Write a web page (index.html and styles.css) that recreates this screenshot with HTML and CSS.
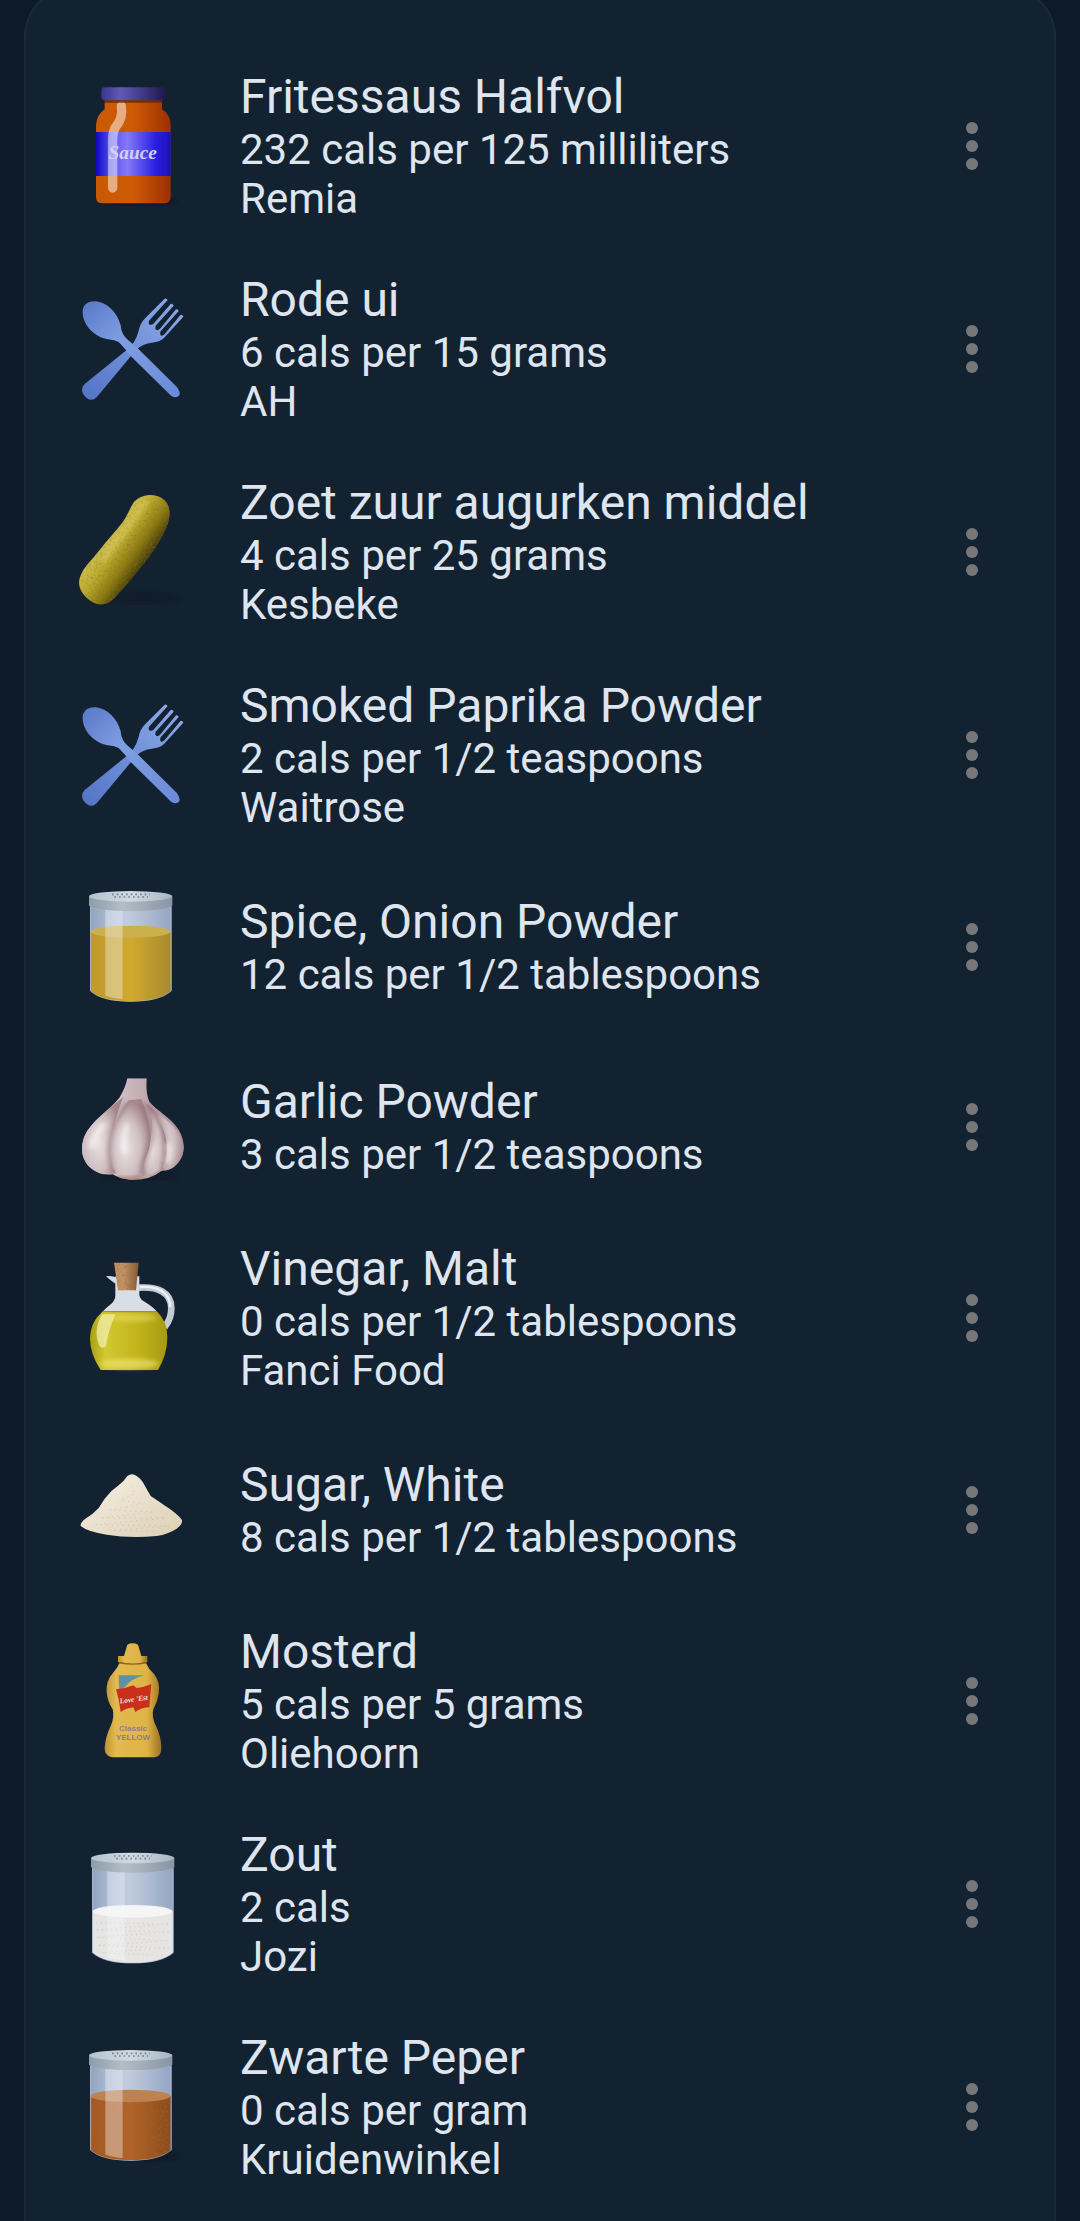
FILE: index.html
```html
<!DOCTYPE html>
<html lang="en">
<head>
  <meta charset="UTF-8">
  <meta name="viewport" content="width=device-width, initial-scale=1">
  <title>Foods</title>
  <link rel="stylesheet" href="styles.css">
</head>
<body>
  <!-- shared shapes and gradients -->
  <svg class="defs" aria-hidden="true">
    <defs>
      <linearGradient id="sauceBody">
        <stop offset="0" stop-color="#c85a06"/><stop offset=".5" stop-color="#cf5a04"/><stop offset="1" stop-color="#9c2f02"/>
      </linearGradient>
      <linearGradient id="sauceLabel">
        <stop offset="0" stop-color="#0d08c0"/><stop offset=".22" stop-color="#5a54f4"/><stop offset=".42" stop-color="#8478f6"/><stop offset=".8" stop-color="#2a1ee0"/><stop offset="1" stop-color="#1c10b8"/>
      </linearGradient>
      <linearGradient id="sauceLid">
        <stop offset="0" stop-color="#3a3390"/><stop offset=".3" stop-color="#6259b6"/><stop offset="1" stop-color="#1d1850"/>
      </linearGradient>
      <linearGradient id="spoonFill" x1="0" y1="0" x2="1" y2="1">
        <stop offset="0" stop-color="#5878c8"/><stop offset=".4" stop-color="#7f9ee2"/><stop offset="1" stop-color="#6a8ad8"/>
      </linearGradient>
      <linearGradient id="forkFill" x1="1" y1="0" x2="0" y2="1">
        <stop offset="0" stop-color="#8fabe8"/><stop offset=".5" stop-color="#7190da"/><stop offset="1" stop-color="#5273c4"/>
      </linearGradient>
      <linearGradient id="pickleFill" x1=".3" y1=".35" x2=".68" y2=".68">
        <stop offset="0" stop-color="#d0c252"/><stop offset=".35" stop-color="#bdab2e"/><stop offset=".7" stop-color="#8a7a10"/><stop offset="1" stop-color="#403a06"/>
      </linearGradient>
      <linearGradient id="glass">
        <stop offset="0" stop-color="#8fa2be"/><stop offset=".2" stop-color="#a9b8d0"/><stop offset=".45" stop-color="#c3cddf"/><stop offset="1" stop-color="#94a5c2"/>
      </linearGradient>
      <linearGradient id="lidTop">
        <stop offset="0" stop-color="#b4c3ce"/><stop offset=".5" stop-color="#d0dae2"/><stop offset="1" stop-color="#a8b6c1"/>
      </linearGradient>
      <linearGradient id="lidSide">
        <stop offset="0" stop-color="#8d9ca9"/><stop offset=".4" stop-color="#b3bdc6"/><stop offset="1" stop-color="#8796a4"/>
      </linearGradient>
      <linearGradient id="onionFill">
        <stop offset="0" stop-color="#c0982c"/><stop offset=".5" stop-color="#d0a92e"/><stop offset="1" stop-color="#a88a30"/>
      </linearGradient>
      <linearGradient id="pepperFill">
        <stop offset="0" stop-color="#a75820"/><stop offset=".5" stop-color="#b4642a"/><stop offset="1" stop-color="#8d4a1a"/>
      </linearGradient>
      <linearGradient id="garlicFill">
        <stop offset="0" stop-color="#e6dde0"/><stop offset=".5" stop-color="#c9b3b8"/><stop offset="1" stop-color="#a98990"/>
      </linearGradient>
      <radialGradient id="clove" cx=".4" cy=".6" r=".6">
        <stop offset="0" stop-color="#e9e1e3"/><stop offset=".6" stop-color="#cfbec2"/><stop offset="1" stop-color="#a5868d"/>
      </radialGradient>
      <linearGradient id="oilFill">
        <stop offset="0" stop-color="#a8a014"/><stop offset=".2" stop-color="#d2c832"/><stop offset=".6" stop-color="#c4b41c"/><stop offset="1" stop-color="#a79a12"/>
      </linearGradient>
      <linearGradient id="cork">
        <stop offset="0" stop-color="#c08e5e"/><stop offset=".4" stop-color="#c59264"/><stop offset="1" stop-color="#855836"/>
      </linearGradient>
      <linearGradient id="sugarFill" x1="0" y1="0" x2="1" y2="1">
        <stop offset="0" stop-color="#f6f0e6"/><stop offset="1" stop-color="#dccfb4"/>
      </linearGradient>
      <linearGradient id="mustardFill">
        <stop offset="0" stop-color="#c0922f"/><stop offset=".2" stop-color="#e2ba50"/><stop offset=".75" stop-color="#dfb346"/><stop offset="1" stop-color="#9c7020"/>
      </linearGradient>
      <filter id="soft" x="-30%" y="-30%" width="160%" height="160%"><feGaussianBlur stdDeviation="6"/></filter>
      <filter id="grain" x="0" y="0" width="100%" height="100%">
        <feTurbulence type="fractalNoise" baseFrequency=".14" numOctaves="2" result="n"/>
        <feColorMatrix in="n" type="matrix" values="0 0 0 0 .25  0 0 0 0 .15  0 0 0 0 .05  1.4 0 0 0 -.66" result="specks"/>
        <feComposite in="specks" in2="SourceGraphic" operator="in" result="cut"/>
        <feMerge><feMergeNode in="SourceGraphic"/><feMergeNode in="cut"/></feMerge>
      </filter>
      <clipPath id="garlicClip">
        <path d="M202 34H260C259 58 258 80 268 104C290 132 332 150 356 188C378 226 376 266 350 292Q336 310 304 312Q270 340 212 338Q180 336 158 322Q120 326 96 306C66 284 58 246 74 206C94 162 148 130 178 92Q196 64 202 34Z"/>
      </clipPath>

      <symbol id="cutlery" viewBox="0 687 450 360">
        <path fill="url(#forkFill)" d="M66 990Q66 980 74 972L200 870Q226 850 236 812Q240 790 256 774L314 716Q320 714 323 720L267 782Q264 792 270 794Q276 796 282 790L332 732Q338 730 341 737L287 797Q284 808 290 810Q296 812 302 804L348 748Q354 746 356 753L302 814Q298 824 304 827Q310 828 316 820L362 764Q369 764 370 770L312 834Q300 846 276 848Q248 850 228 870L110 1012Q96 1026 80 1014Q67 1004 66 990Z"/>
        <path fill="url(#spoonFill)" d="M68 760C66 734 84 722 108 724C142 728 172 758 182 796Q184 824 204 840L230 862L350 980Q362 996 358 1006Q350 1016 334 1008L212 888Q196 866 176 846Q164 840 144 838C104 832 70 796 68 760Z"/>
      </symbol>
      <symbol id="jarBody" viewBox="0 0 450 360">
        <path fill="url(#glass)" d="M90 40H335V312Q300 344 212 344T90 312Z"/>
      </symbol>
      <symbol id="jarTop" viewBox="0 0 450 360">
        <path fill="#f4f6fa" opacity=".38" d="M136 66H188V336Q160 334 136 326Z"/>
        <path fill="none" stroke="#b9c6da" stroke-width="3" opacity=".6" d="M92 60V311M333 60V311"/>
        <path fill="url(#lidSide)" d="M87 28H337V56Q306 72 212 72T87 56Z"/>
        <ellipse fill="url(#lidTop)" cx="212" cy="28" rx="125" ry="16"/>
        <path fill="none" stroke="#75818d" stroke-width="5" stroke-dasharray="5 9" d="M156 22H270M163 30H264"/>
      </symbol>
    </defs>
  </svg>

  <main class="panel">
    <ul class="food-list">
      <li class="food">
        <svg class="food-icon" viewBox="0 78 450 360" aria-hidden="true">
          <ellipse cx="240" cy="424" rx="110" ry="8" fill="#07101a" opacity=".6" filter="url(#soft)"/>
          <path fill="url(#sauceBody)" d="M134 116H306V148Q332 164 332 196V410Q332 430 312 430H128Q108 430 108 410V196Q110 164 134 148Z"/>
          <rect x="108" y="216" width="224" height="132" fill="url(#sauceLabel)"/>
          <path fill="none" stroke="#fff" stroke-opacity=".5" stroke-width="28" stroke-linecap="round" stroke-linejoin="round" d="M184 138Q190 176 166 202Q158 216 158 240V384"/>
          <path fill="#5e1a06" opacity=".7" d="M132 118H308V128H132Z"/>
          <rect x="124" y="82" width="192" height="39" rx="10" fill="url(#sauceLid)"/>
          <text class="sauce-text" x="218" y="296">Sauce</text>
        </svg>
        <div class="food-text">
          <h2>Fritessaus Halfvol</h2>
          <p>232 cals per 125 milliliters</p>
          <p>Remia</p>
        </div>
        <button class="more" type="button" aria-label="More options"><span></span><span></span><span></span></button>
      </li>

      <li class="food">
        <svg class="food-icon" viewBox="0 0 450 360" aria-hidden="true"><use href="#cutlery" width="450" height="360"/></svg>
        <div class="food-text">
          <h2>Rode ui</h2>
          <p>6 cals per 15 grams</p>
          <p>AH</p>
        </div>
        <button class="more" type="button" aria-label="More options"><span></span><span></span><span></span></button>
      </li>

      <li class="food">
        <svg class="food-icon" viewBox="0 66 450 360" aria-hidden="true">
          <ellipse cx="250" cy="384" rx="110" ry="12" fill="#0a1420" opacity=".5" filter="url(#soft)"/>
          <path filter="url(#grain)" fill="url(#pickleFill)" d="M224 94C244 72 284 68 308 86C332 102 334 134 322 166C306 206 286 238 258 274C228 312 200 346 166 382C144 406 116 412 88 390C58 366 50 340 64 312C76 286 96 270 116 244C138 214 168 184 190 154C206 130 212 108 224 94Z"/>
          <path fill="none" stroke="#f0e68a" stroke-opacity=".3" stroke-width="22" stroke-linecap="round" filter="url(#soft)" d="M252 100Q222 140 200 176Q162 218 134 264"/>
        </svg>
        <div class="food-text">
          <h2>Zoet zuur augurken middel</h2>
          <p>4 cals per 25 grams</p>
          <p>Kesbeke</p>
        </div>
        <button class="more" type="button" aria-label="More options"><span></span><span></span><span></span></button>
      </li>

      <li class="food">
        <svg class="food-icon" viewBox="0 0 450 360" aria-hidden="true"><use href="#cutlery" width="450" height="360"/></svg>
        <div class="food-text">
          <h2>Smoked Paprika Powder</h2>
          <p>2 cals per 1/2 teaspoons</p>
          <p>Waitrose</p>
        </div>
        <button class="more" type="button" aria-label="More options"><span></span><span></span><span></span></button>
      </li>

      <li class="food">
        <svg class="food-icon" viewBox="0 0 450 360" aria-hidden="true">
          <use href="#jarBody" width="450" height="360"/>
          <path fill="url(#onionFill)" d="M92 134H333V311Q300 342 212 342T92 311Z"/>
          <ellipse cx="212" cy="134" rx="120" ry="18" fill="#cdb04e"/>
          <use href="#jarTop" width="450" height="360"/>
        </svg>
        <div class="food-text">
          <h2>Spice, Onion Powder</h2>
          <p>12 cals per 1/2 tablespoons</p>
        </div>
        <button class="more" type="button" aria-label="More options"><span></span><span></span><span></span></button>
      </li>

      <li class="food">
        <svg class="food-icon" viewBox="0 0 450 360" aria-hidden="true">
          <ellipse cx="240" cy="326" rx="110" ry="10" fill="#08111b" opacity=".4" filter="url(#soft)"/>
          <g clip-path="url(#garlicClip)">
            <rect x="60" y="30" width="320" height="312" fill="url(#garlicFill)"/>
            <path fill="url(#clove)" d="M190 90C130 140 66 170 66 250C70 310 130 330 170 318C140 270 150 190 190 90Z"/>
            <path fill="url(#clove)" d="M262 112C310 170 280 250 316 312C350 310 374 280 372 240C366 180 300 150 262 112Z"/>
            <path fill="url(#clove)" d="M262 112C300 160 326 200 320 260C318 292 300 322 246 326C250 270 300 200 262 112Z"/>
            <path fill="url(#clove)" d="M206 100C170 150 140 200 150 270C154 320 190 340 220 338C256 330 246 290 262 260C284 210 262 140 244 96Z"/>
            <g fill="none" stroke="#84606a" stroke-width="10" opacity=".55" filter="url(#soft)">
              <path d="M200 106C160 170 130 220 158 318M250 108C270 160 292 200 262 256Q244 290 248 322M262 110C304 160 330 210 312 306"/>
            </g>
            <path fill="none" stroke="#fff" stroke-width="20" stroke-linecap="round" opacity=".5" filter="url(#soft)" d="M96 236Q102 206 128 176M192 250Q186 214 200 178M324 236Q330 262 322 280"/>
            <path fill="#a0714f" opacity=".7" filter="url(#soft)" d="M170 330H250V350H170Z"/>
          </g>
        </svg>
        <div class="food-text">
          <h2>Garlic Powder</h2>
          <p>3 cals per 1/2 teaspoons</p>
        </div>
        <button class="more" type="button" aria-label="More options"><span></span><span></span><span></span></button>
      </li>

      <li class="food">
        <svg class="food-icon" viewBox="0 57 450 360" aria-hidden="true">
          <path fill="none" stroke="#c3cbd6" stroke-width="20" d="M236 146C290 142 334 158 334 208Q334 240 314 264"/>
          <path fill="none" stroke="#eef2f6" stroke-width="7" d="M240 144C290 140 330 158 331 204"/>
          <path fill="#d5dbe2" d="M138 112Q154 108 170 116V136Q158 130 138 112Z"/>
          <path fill="#d8dee6" d="M166 112H238V168Q240 182 256 190Q280 204 294 222H124Q140 204 154 194Q166 184 166 168Z"/>
          <path fill="url(#oilFill)" d="M130 217H290Q322 246 322 294Q322 346 294 393H122Q90 346 90 298Q92 246 130 217Z"/>
          <ellipse cx="208" cy="374" rx="88" ry="15" fill="#f0ec7c" opacity=".6" filter="url(#soft)"/>
          <ellipse cx="220" cy="236" rx="70" ry="12" fill="#eee46a" opacity=".5" filter="url(#soft)"/>
          <path fill="#f4f2b4" opacity=".7" d="M126 226H166Q146 270 138 320Q130 332 118 320Q98 276 126 226Z"/>
          <path fill="none" stroke="#8f8a30" stroke-width="3" d="M130 218H290"/>
          <path filter="url(#grain)" fill="url(#cork)" d="M162 71H236L228 154H174Z"/>
        </svg>
        <div class="food-text">
          <h2>Vinegar, Malt</h2>
          <p>0 cals per 1/2 tablespoons</p>
          <p>Fanci Food</p>
        </div>
        <button class="more" type="button" aria-label="More options"><span></span><span></span><span></span></button>
      </li>

      <li class="food">
        <svg class="food-icon" viewBox="0 630 450 360" aria-hidden="true">
          <path fill="url(#sugarFill)" d="M202 708Q216 698 230 708Q246 718 256 740L272 768Q296 784 322 802Q350 820 366 840Q368 854 350 866Q326 882 290 888Q210 896 140 884Q84 876 62 858Q60 848 76 836Q100 822 116 804L134 776Q152 752 176 736Q190 726 202 708Z"/>
          <path fill="none" stroke="#b9a783" stroke-width="3" stroke-dasharray="3 13" opacity=".5" d="M214 738L226 760L182 780L250 792L150 810L280 816L120 834L316 834L106 854L330 858L150 872L290 874"/>
        </svg>
        <div class="food-text">
          <h2>Sugar, White</h2>
          <p>8 cals per 1/2 tablespoons</p>
        </div>
        <button class="more" type="button" aria-label="More options"><span></span><span></span><span></span></button>
      </li>

      <li class="food">
        <svg class="food-icon" viewBox="0 63 450 360" aria-hidden="true">
          <path fill="url(#mustardFill)" d="M178 130H258Q266 148 282 162Q302 186 296 222Q292 246 280 268Q274 292 288 318Q304 350 304 384Q304 410 284 412H156Q134 408 134 384Q136 350 152 318Q164 292 158 268Q142 244 140 216Q138 182 158 160Q172 146 178 130Z"/>
          <path fill="url(#mustardFill)" d="M202 74Q218 66 234 74L244 108H262V126Q218 136 174 126V108H192Z"/>
          <path fill="none" stroke="#8f661c" stroke-width="4" d="M176 128Q218 137 260 128"/>
          <path fill="#5f90a8" d="M176 166H252Q214 176 196 200L178 212Z"/>
          <path fill="#c9301c" d="M168 208Q196 206 220 196L230 204Q252 202 274 192L268 262Q244 262 226 276L220 262Q196 266 182 276Q178 240 168 208Z"/>
          <text class="mustard-script" x="221" y="245" transform="rotate(-8 221 236)">Love 'Est</text>
          <text class="mustard-name" x="219" y="332">Classic</text>
          <text class="mustard-name" x="219" y="359">YELLOW</text>
        </svg>
        <div class="food-text">
          <h2>Mosterd</h2>
          <p>5 cals per 5 grams</p>
          <p>Oliehoorn</p>
        </div>
        <button class="more" type="button" aria-label="More options"><span></span><span></span><span></span></button>
      </li>

      <li class="food">
        <svg class="food-icon" viewBox="-6 -14 450 360" aria-hidden="true">
          <use href="#jarBody" width="450" height="360"/>
          <path fill="#e6e5e3" d="M92 188H333V311Q300 342 212 342T92 311Z"/>
          <path fill="none" stroke="#b5b2ac" stroke-width="3" stroke-dasharray="3 11" opacity=".5" d="M102 222L322 226L100 244L326 250L102 266L320 276L106 290L320 298L120 312L300 320"/>
          <ellipse cx="212" cy="188" rx="120" ry="19" fill="#f5f5f5"/>
          <use href="#jarTop" width="450" height="360"/>
        </svg>
        <div class="food-text">
          <h2>Zout</h2>
          <p>2 cals</p>
          <p>Jozi</p>
        </div>
        <button class="more" type="button" aria-label="More options"><span></span><span></span><span></span></button>
      </li>

      <li class="food">
        <svg class="food-icon" viewBox="0 3 450 360" aria-hidden="true">
          <ellipse cx="260" cy="330" rx="100" ry="12" fill="#08111b" opacity=".5" filter="url(#soft)"/>
          <use href="#jarBody" width="450" height="360"/>
          <path filter="url(#grain)" fill="url(#pepperFill)" d="M92 150H333V311Q300 342 212 342T92 311Z"/>
          <ellipse cx="212" cy="150" rx="120" ry="19" fill="#bd8152"/>
          <use href="#jarTop" width="450" height="360"/>
        </svg>
        <div class="food-text">
          <h2>Zwarte Peper</h2>
          <p>0 cals per gram</p>
          <p>Kruidenwinkel</p>
        </div>
        <button class="more" type="button" aria-label="More options"><span></span><span></span><span></span></button>
      </li>
    </ul>
  </main>
</body>
</html>
```
FILE: styles.css
```css
* {
  box-sizing: border-box;
}

body {
  margin: 0;
  min-height: 100vh;
  display: flex;
  flex-direction: column;
  overflow-x: hidden;
  background-color: #0d1a2a;
  color: #dfe5ee;
  font-family: Roboto, 'Noto Sans', sans-serif;
}

.defs {
  position: absolute;
  width: 0;
  height: 0;
}

.panel {
  flex: 1;
  margin: -12px 24px 0;
  padding: 54px 46px 12px 34px;
  background-color: #132231;
  border: 2px solid #1a2a37;
  border-bottom: none;
  border-radius: 48px 48px 0 0;
}

.food-list {
  list-style: none;
  margin: 0;
  padding: 0;
}

.food {
  display: flex;
  align-items: center;
  min-height: 180px;
  padding: 25px 0 24px;
}

.food-icon {
  flex: none;
  width: 150px;
  height: 120px;
}

.food-text {
  flex: 1;
  min-width: 0;
  padding: 0 16px 0 30px;
}

.food-text h2 {
  margin: 0;
  font-size: 48px;
  font-weight: 400;
  line-height: 56px;
}

.food-text p {
  margin: 0;
  font-size: 42px;
  line-height: 49px;
}

.more {
  display: flex;
  flex-direction: column;
  align-items: center;
  justify-content: center;
  gap: 6px;
  width: 72px;
  height: 96px;
  padding: 0;
  border: none;
  background: none;
  cursor: pointer;
}

.more span {
  width: 12px;
  height: 12px;
  border-radius: 50%;
  background-color: #77777a;
}

.sauce-text {
  font: italic bold 58px 'Liberation Serif', serif;
  fill: #d3cffb;
  text-anchor: middle;
}

.mustard-script {
  font: italic bold 22px 'Liberation Serif', serif;
  fill: #f6e3dc;
  text-anchor: middle;
}

.mustard-name {
  font: bold 24px 'Liberation Sans', sans-serif;
  fill: #8d7f8c;
  text-anchor: middle;
}
```
